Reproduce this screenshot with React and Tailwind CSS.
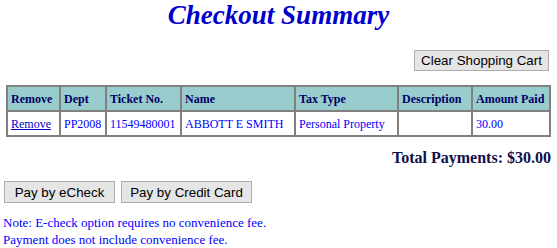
export default function App() {
  const serif = { fontFamily: '"Liberation Serif", "Times New Roman", serif' };
  const sans = { fontFamily: '"Liberation Sans", Arial, sans-serif' };
  const th = "border border-[#808080] px-[3px] h-[25px] text-left font-bold text-[#000066] text-[12px] leading-[14px] whitespace-nowrap";
  const td = "border border-[#808080] px-[3px] h-[25px] text-left text-[#0000ff] text-[12px] leading-[14px] whitespace-nowrap";
  return (
    <div className="w-[557px] h-[248px] bg-white overflow-hidden font-['Liberation_Serif',serif]">
      <h1 className="text-center text-[27px] leading-[30px] font-bold italic text-[#0000cc] font-['Liberation_Serif',serif]">
        Checkout Summary
      </h1>
      <div className="flex justify-end pr-[8px] mt-[20px]">
        <button
          className="w-[135px] h-[21px] bg-[#e5e5e5] border border-[#adadad] text-[13.33px] leading-[15px] text-black"
          style={sans}
        >
          Clear Shopping Cart
        </button>
      </div>
      <table
        className="ml-[6px] mt-[14px] w-[545px] table-fixed border border-[#808080] border-separate border-spacing-0"
      >
        <colgroup>
          <col className="w-[53px]" />
          <col className="w-[46px]" />
          <col className="w-[75px]" />
          <col className="w-[114px]" />
          <col className="w-[103px]" />
          <col className="w-[74px]" />
          <col className="w-[78px]" />
        </colgroup>
        <thead>
          <tr className="bg-[#99cccc]">
            <th className={th}>Remove</th>
            <th className={th}>Dept</th>
            <th className={th}>Ticket No.</th>
            <th className={th}>Name</th>
            <th className={th}>Tax Type</th>
            <th className={th}>Description</th>
            <th className={th}>Amount Paid</th>
          </tr>
        </thead>
        <tbody>
          <tr>
            <td className={td}>
              <a href="#" className="underline text-[#0000cc]">Remove</a>
            </td>
            <td className={td}>PP2008</td>
            <td className={td}>11549480001</td>
            <td className={td}>ABBOTT E SMITH</td>
            <td className={td}>Personal Property</td>
            <td className={td}></td>
            <td className={td}>30.00</td>
          </tr>
        </tbody>
      </table>
      <div className="mt-[12px] pr-[6px] text-right text-[16px] leading-[18px] font-bold text-[#10104a]">
        Total Payments: $30.00
      </div>
      <div className="flex gap-[6px] pl-[4px] mt-[14px]">
        <button
          className="w-[111px] h-[22px] bg-[#e5e5e5] border border-[#adadad] text-[13.33px] leading-[15px] text-black"
          style={sans}
        >
          Pay by eCheck
        </button>
        <button
          className="w-[131px] h-[22px] bg-[#e5e5e5] border border-[#adadad] text-[13.33px] leading-[15px] text-black"
          style={sans}
        >
          Pay by Credit Card
        </button>
      </div>
      <div className="mt-[11px] pl-[3px] text-[13px] leading-[17px] text-[#0000ff]">
        <div>Note: E-check option requires no convenience fee.</div>
        <div>Payment does not include convenience fee.</div>
      </div>
    </div>
  );
}
